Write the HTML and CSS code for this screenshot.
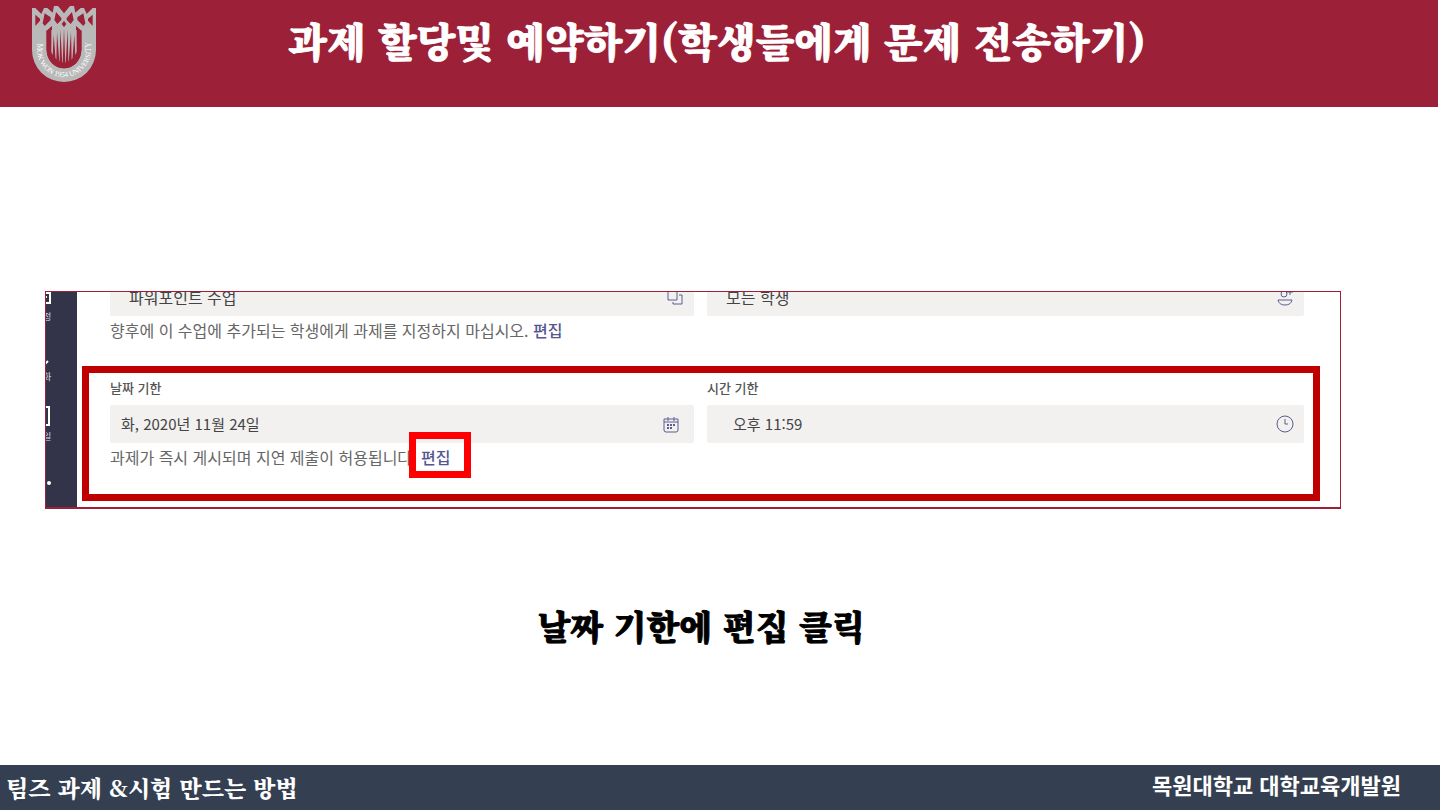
FILE: index.html
```html
<!DOCTYPE html>
<html lang="ko">
<head>
<meta charset="utf-8">
<meta name="viewport" content="width=device-width, initial-scale=1">
<title>과제 할당및 예약하기</title>
<link rel="stylesheet" href="styles.css">
</head>
<body>
<header class="header">
  <svg class="logo" viewBox="36 18 192 228" role="img" aria-label="MOKWON UNIVERSITY 1954">
    <path class="logo-fill" d="M36 76V150A96 96 0 0 0 228 150V76L184 88V150A52 55 0 0 1 80 150V88Z"/>
    <path class="logo-fill" d="M36 24H46L64 42L72 24H82L98 38L102 18H114L132 40L150 18H162L166 38L182 24H192L200 42L218 24H228V90H184L168 100H96L80 90H36Z"/>
    <path class="logo-gap" d="M46 44L60 56V62L46 78ZM74 40L92 52V60L74 78L68 70ZM218 44L204 56V62L218 78ZM190 40L172 52V60L190 78L196 70ZM108 36L124 54V60L112 72L103 60ZM156 36L140 54V60L152 72L161 60ZM125 72L132 62L139 72L132 82Z"/>
    <path class="logo-gap" d="M80 92L96 78V152L80 150ZM184 92L168 78V152L184 150ZM80 150L92 148Q98 172 132 184Q166 172 172 148L184 150A52 55 0 0 1 80 150Z"/>
    <path class="logo-fill" d="M92 90H172V154L165 166L157 176L147 182L136 188H128L117 182L107 176L99 166L92 154Z"/>
    <path class="logo-gap" d="M80 94L94 80V166L80 150ZM184 94L170 80V166L184 150ZM101 104L107 180L98 170ZM111 96L118 186L109 180ZM121 88L127 192L119 187ZM132 84L136 192H128ZM143 88L145 187L137 192ZM153 96L155 180L146 186ZM163 104L166 170L157 180Z"/>
    <path id="ring" fill="none" d="M51 131V150A81 81 0 0 0 213 150V110"/>
    <text class="logo-text"><textPath href="#ring" startOffset="0">MOK WON 1954 UNIVERSITY</textPath></text>
  </svg>
  <h1 class="title">과제 할당및 예약하기(학생들에게 문제 전송하기)</h1>
</header>

<main class="main">
  <div class="capture">
    <nav class="rail" aria-label="앱">
      <a class="rail-item" href="#calendar">
        <svg viewBox="0 0 20 20" class="rail-icon"><path d="M2 2H17V17H2Z"/><path d="M2 7H17M12 11H14"/></svg>
        <span>일정</span>
      </a>
      <a class="rail-item" href="#calls">
        <svg viewBox="0 0 20 20" class="rail-icon"><path d="M4 2Q3 12 13 17L15 15"/></svg>
        <span>통화</span>
      </a>
      <a class="rail-item" href="#files">
        <svg viewBox="0 0 20 20" class="rail-icon"><path d="M2 1H16V19H2Z"/></svg>
        <span>파일</span>
      </a>
      <a class="rail-more" href="#more" aria-label="더 보기"><i></i><i></i><i></i></a>
    </nav>

    <form class="form">
      <div class="group">
        <div class="columns">
          <div class="field field-mid">
            <input class="input input-large" type="text" value="파워포인트 수업" aria-label="수업" readonly>
            <svg class="icon icon-copy" viewBox="0 0 18 18"><path d="M2 1H11V12H2ZM13 7H16V16H7V14"/></svg>
          </div>
          <div class="field field-mid">
            <input class="input input-large" type="text" value="모든 학생" aria-label="학생" readonly>
            <svg class="icon" viewBox="0 0 18 18"><circle cx="8" cy="6" r="3"/><path d="M2 12H16Q15 17 9 17T2 12ZM11 4H17M14 1V7"/></svg>
          </div>
        </div>
        <p class="note">향후에 이 수업에 추가되는 학생에게 과제를 지정하지 마십시오. <a class="edit" href="#students">편집</a></p>
      </div>

      <section class="group due">
        <div class="columns">
          <div>
            <label class="label" for="due-date">날짜 기한</label>
            <div class="field field-date">
              <input class="input" id="due-date" type="text" value="화, 2020년 11월 24일">
              <svg class="icon icon-date" viewBox="0 0 18 18"><path d="M2 4H16V15Q16 17 14 17H4Q2 17 2 15ZM6 2V6M12 2V6M2 7H16"/><path d="M5 10H7M8 10H10M11 10H13M5 13H7M8 13H10" stroke-width="2"/></svg>
            </div>
          </div>
          <div>
            <label class="label" for="due-time">시간 기한</label>
            <div class="field field-time">
              <input class="input" id="due-time" type="text" value="오후 11:59">
              <svg class="icon" viewBox="0 0 18 18"><circle cx="9" cy="9" r="8"/><path d="M9 4V9H12"/></svg>
            </div>
          </div>
        </div>
        <p class="note">과제가 즉시 게시되며 지연 제출이 허용됩니다. <a class="edit edit-marked" href="#due">편집</a></p>
      </section>
    </form>
  </div>
  <p class="caption">날짜 기한에 편집 클릭</p>
</main>

<footer class="footer">
  <span class="footer-topic">팀즈 과제 &amp;시험 만드는 방법</span>
  <span class="footer-org">목원대학교 대학교육개발원</span>
</footer>
</body>
</html>
```
FILE: styles.css
```css
* { box-sizing: border-box; }

body {
  margin: 0;
  min-height: 100vh;
  display: flex;
  flex-direction: column;
  background: #fff;
  color: #000;
  font-family: "Noto Sans CJK KR", sans-serif;
}

h1, p { margin: 0; }
a { text-decoration: none; }

.header {
  display: grid;
  grid-template-columns: 1fr auto 1fr;
  align-items: start;
  margin-right: 2px;
  padding: 6px 36px 25px 32px;
  background: #9c2138;
}

.logo { display: block; width: 64px; height: 76px; }
.logo-fill { fill: #b9b9b9; }
.logo-gap { fill: #9c2138; }
.logo-text {
  fill: #fff;
  font: 22px "Liberation Serif", serif;
}

.title,
.caption,
.footer-topic {
  font-family: "Noto Serif CJK KR", "Noto Sans CJK KR", serif;
  font-weight: 900;
}

.title {
  padding-top: 4px;
  color: #fff;
  font-size: 40px;
  line-height: 60px;
  -webkit-text-stroke: 1px #fff;
}

.main {
  flex: 1;
  padding: 184px 0 0;
}

.capture {
  display: flex;
  margin: 0 99px 0 45px;
  overflow: hidden;
  border: 1px solid #9c2138;
  border-bottom-width: 2px;
}

.rail {
  flex: none;
  width: 68px;
  margin: -7px 0 0 -37px;
  display: flex;
  flex-direction: column;
  align-items: center;
  background: #33344a;
  color: #fff;
}

.rail-item {
  height: 60px;
  display: flex;
  flex-direction: column;
  align-items: center;
  gap: 2px;
  color: #d9d9e2;
  font-size: 9px;
  line-height: 16px;
}

.rail-icon {
  width: 20px;
  height: 22px;
  fill: none;
  stroke: #fff;
  stroke-width: 2;
}

.rail-more { display: flex; gap: 4px; padding: 16px 4px 16px 0; }
.rail-more i { width: 4px; height: 4px; border-radius: 50%; background: #fff; }

.form {
  flex: 1;
  display: flex;
  flex-direction: column;
  gap: 22px;
  margin-top: -14px;
  padding: 0 20px 6px 5px;
}

.group { padding: 0 16px 0 28px; }

.due {
  padding: 6px 9px 23px 21px;
  border: 7px solid #c00000;
}

.columns {
  display: grid;
  grid-template-columns: 584fr 597fr;
  column-gap: 13px;
}

.label {
  display: block;
  margin-bottom: 8px;
  color: #555;
  font-size: 13px;
  font-weight: 500;
  line-height: 18px;
}

.field {
  display: flex;
  align-items: center;
  height: 38px;
  padding-right: 10px;
  border-radius: 2px;
  background: #f2f1f0;
}

.field-mid { padding-left: 19px; }
.field-date { padding-left: 11px; padding-right: 14px; }
.field-time { padding-left: 26px; }

.input {
  flex: 1;
  min-width: 0;
  padding: 0;
  border: 0;
  background: transparent;
  color: #444;
  font: inherit;
  font-size: 15px;
  line-height: 24px;
}

.input-large { font-size: 16px; }

.icon {
  width: 18px;
  height: 18px;
  fill: none;
  stroke: #5c5d91;
  stroke-width: 1;
}

.note {
  color: #666;
  font-size: 16px;
  line-height: 28px;
}

.edit { color: #555690; font-weight: 500; }
.edit-marked { position: relative; }
.edit-marked::after {
  content: "";
  position: absolute;
  inset: -13px -21px -9px -12px;
  border: 7px solid #f00;
}

.caption {
  margin: 92px 38px 0 0;
  font-size: 34px;
  line-height: 50px;
  text-align: center;
  -webkit-text-stroke: 1px #000;
}

.footer {
  display: flex;
  justify-content: space-between;
  padding: 0 39px 0 6px;
  background: #343f52;
  color: #fff;
  line-height: 45px;
}

.footer-topic { font-size: 23px; }

.footer-org { font-size: 22px; font-weight: 700; line-height: 38px; }
```
